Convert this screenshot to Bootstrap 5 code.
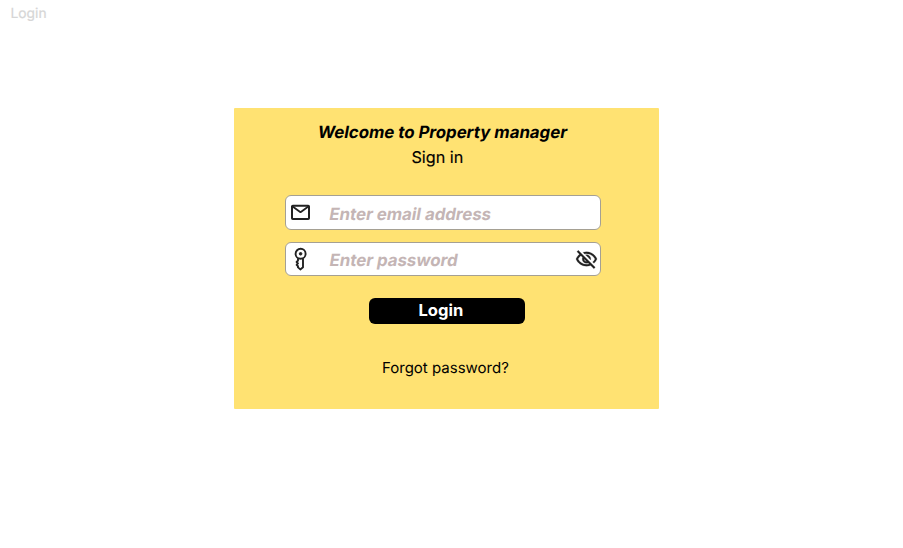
<!DOCTYPE html>
<html lang="en">
<head>
<meta charset="utf-8">
<meta name="viewport" content="width=device-width, initial-scale=1">
<title>Login</title>
<link href="https://cdn.jsdelivr.net/npm/bootstrap@5.3.0/dist/css/bootstrap.min.css" rel="stylesheet">
<style>
body{font-family:Inter,sans-serif;color:#000;height:548px;overflow:hidden;text-rendering:geometricPrecision}
.page-label{font-size:13.8px;line-height:18px;color:#d6d6d6;padding:5px 0 0 10.5px;height:108px;-webkit-text-stroke:.2px #d6d6d6}
.login-panel{width:425px;height:301px;margin-left:234.4px;background:#ffe272;border-radius:1px;padding-top:14px}
.slanted{transform:skewX(-10deg)}
.welcome{font-size:16.77px;line-height:22px;margin:0 0 0 -8px}
.signin{font-size:16.2px;line-height:22px;margin:2px 0 0 -19px;-webkit-text-stroke:.15px #000}
.fields{width:316px;margin:27px 0 0 50.5px;gap:12px}
.field{height:34.5px;border:1px solid #a5a093;border-radius:6px;overflow:hidden}
.field svg{flex:none}
.field input{font-size:16.8px;line-height:20px;padding:3px 0 0;margin-left:18.5px;color:#c4b5b5;height:34px;min-width:0}
.field input[type=password]{padding-top:2px}
.field input::placeholder{color:#c4b5b5;opacity:1}
.lead-icon{margin-left:4px}
.eye-icon{margin:1px 2px 0 0}
.login-btn{width:156px;height:26px;margin:22px 0 0 134.5px;border-radius:6px;font-size:16.6px;line-height:24px;padding:0 12px 2px 0}
.forgot{font-size:15px;line-height:20px;margin:34px 0 0 -3px}
</style>
</head>
<body class="bg-white">
<header class="page-label">Login</header>
<main class="login-panel">
<form class="d-flex flex-column">
<h1 class="welcome slanted fw-bold text-center">Welcome to Property manager</h1>
<h2 class="signin fw-normal text-center">Sign in</h2>
<div class="fields d-flex flex-column">
<label class="field d-flex align-items-center bg-white">
<svg class="lead-icon" width="22" height="22" viewBox="0 0 22 22" fill="none" stroke="#222" stroke-width="2" stroke-linejoin="round"><rect x="2" y="4.700" width="17" height="13.300" rx=".8"/><path d="m2.300 5.200 8.200 6 8.200-6" stroke-width="1.800"/></svg>
<input class="slanted form-control border-0 bg-transparent shadow-none fw-bold" type="email" placeholder="Enter email address">
</label>
<label class="field d-flex align-items-center bg-white">
<svg class="lead-icon" width="22" height="24" viewBox="0 0 22 24" fill="none" stroke="#222" stroke-width="1.900" stroke-linejoin="round"><circle cx="10.600" cy="6.800" r="5"/><circle cx="10.600" cy="6.800" r="1.300" fill="#222" stroke-width="1"/><path d="M8 11.200v2.300l-1.400 1.500 1.400 1.400-1.400 1.500L8 19.200v1.200l2.300 2 2.700-2.200v-9"/></svg>
<input class="slanted form-control border-0 bg-transparent shadow-none fw-bold" type="password" placeholder="Enter password">
<svg class="eye-icon" width="23" height="23" viewBox="0 0 24 24" fill="#222" stroke="#222" stroke-width=".2"><path d="M12 6c3.790 0 7.170 2.130 8.820 5.500-.59 1.220-1.420 2.270-2.410 3.120l1.410 1.410c1.390-1.230 2.490-2.770 3.180-4.530C21.270 7.110 17 4 12 4c-1.270 0-2.490.2-3.640.57l1.650 1.650C10.660 6.090 11.320 6 12 6zm-1.070 1.140L13 9.210c.57.25 1.030.71 1.280 1.280l2.070 2.070c.08-.34.14-.7.14-1.070C16.500 9.010 14.480 7 12 7c-.37 0-.72.05-1.070.14zM2.010 3.870l2.680 2.680C3.060 7.830 1.770 9.530 1 11.500 2.730 15.890 7 19 12 19c1.520 0 2.980-.29 4.320-.82l3.420 3.420 1.410-1.410L3.420 2.450 2.010 3.870zm7.500 7.500 2.610 2.610c-.04.01-.08.02-.12.02-1.380 0-2.500-1.120-2.500-2.500 0-.05.01-.08.01-.13zm-3.400-3.400 1.750 1.750c-.23.55-.36 1.150-.36 1.780 0 2.480 2.020 4.500 4.500 4.500.63 0 1.230-.13 1.770-.36l.98.98c-.88.24-1.800.38-2.750.38-3.790 0-7.170-2.130-8.820-5.500.7-1.430 1.720-2.610 2.930-3.530z"/></svg>
</label>
</div>
<button class="login-btn btn btn-dark bg-black border-0 fw-bold" type="button">Login</button>
<a class="forgot text-center text-black text-decoration-none" href="#">Forgot password?</a>
</form>
</main>
<script src="https://cdn.jsdelivr.net/npm/bootstrap@5.3.0/dist/js/bootstrap.bundle.min.js"></script>
</body>
</html>
